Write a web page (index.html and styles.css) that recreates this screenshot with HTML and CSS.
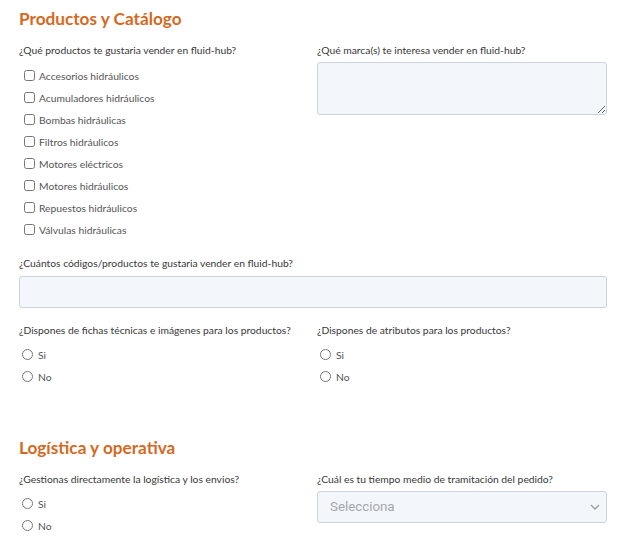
FILE: index.html
```html
<!DOCTYPE html>
<html lang="es">
<head>
<meta charset="utf-8">
<link rel="stylesheet" href="styles.css">
</head>
<body>
<form class="form">
  <h2 class="section-title">Productos y Catálogo</h2>
  <div class="grid">
    <div class="field">
      <p class="label">¿Qué productos te gustaria vender en fluid-hub?</p>
      <div class="options checks">
        <label class="opt"><input type="checkbox"><span>Accesorios hidráulicos</span></label>
        <label class="opt"><input type="checkbox"><span>Acumuladores hidráulicos</span></label>
        <label class="opt"><input type="checkbox"><span>Bombas hidráulicas</span></label>
        <label class="opt"><input type="checkbox"><span>Filtros hidráulicos</span></label>
        <label class="opt"><input type="checkbox"><span>Motores eléctricos</span></label>
        <label class="opt"><input type="checkbox"><span>Motores hidráulicos</span></label>
        <label class="opt"><input type="checkbox"><span>Repuestos hidráulicos</span></label>
        <label class="opt"><input type="checkbox"><span>Válvulas hidráulicas</span></label>
      </div>
    </div>
    <div class="field">
      <p class="label">¿Qué marca(s) te interesa vender en fluid-hub?</p>
      <textarea class="control textarea"></textarea>
    </div>
  </div>

  <div class="field full">
    <p class="label">¿Cuántos códigos/productos te gustaria vender en fluid-hub?</p>
    <input class="control input" type="text">
  </div>

  <div class="grid row3">
    <div class="field">
      <p class="label">¿Dispones de fichas técnicas e imágenes para los productos?</p>
      <div class="options radios">
        <label class="opt"><input type="radio" name="fichas"><span>Si</span></label>
        <label class="opt"><input type="radio" name="fichas"><span>No</span></label>
      </div>
    </div>
    <div class="field">
      <p class="label">¿Dispones de atributos para los productos?</p>
      <div class="options radios">
        <label class="opt"><input type="radio" name="attr"><span>Si</span></label>
        <label class="opt"><input type="radio" name="attr"><span>No</span></label>
      </div>
    </div>
  </div>

  <h2 class="section-title second">Logística y operativa</h2>
  <div class="grid">
    <div class="field">
      <p class="label">¿Gestionas directamente la logística y los envios?</p>
      <div class="options radios">
        <label class="opt"><input type="radio" name="log"><span>Si</span></label>
        <label class="opt"><input type="radio" name="log"><span>No</span></label>
      </div>
    </div>
    <div class="field">
      <p class="label">¿Cuál es tu tiempo medio de tramitación del pedido?</p>
      <div class="select-wrap">
        <select class="control select">
          <option>Selecciona</option>
        </select>
        <svg class="chev" width="10" height="6" viewBox="0 0 10 6"><path d="M1 1l4 4 4-4" fill="none" stroke="#9aa0a6" stroke-width="1.4"/></svg>
      </div>
    </div>
  </div>
</form>
</body>
</html>
```

FILE: styles.css
```css
* { box-sizing: border-box; }
html, body { margin: 0; padding: 0; background: #fff; }
body {
  font-family: "Lato", "Open Sans", sans-serif;
  color: #3c3c3c;
  font-size: 10px;
}
.form {
  padding: 0 25px 0 19px;
  width: 632px;
}
.section-title {
  margin: 0;
  padding-top: 9px;
  height: 38px;
  font-family: "Lato", sans-serif;
  font-weight: 700;
  font-size: 17.2px;
  line-height: 20px;
  color: #d5691f;
}
.section-title.second {
  margin-top: 42px;
}
.grid {
  display: grid;
  grid-template-columns: 290px 290px;
  column-gap: 8px;
}
.label {
  margin: 0;
  font-size: 10.3px;
  line-height: 14px;
  padding-top: 5px;
  height: 19px;
  color: #383838;
}
.options {
  display: flex;
  flex-direction: column;
}
.opt {
  display: flex;
  align-items: center;
  height: 22px;
  font-size: 10.3px;
  color: #555;
}
.checks { padding-top: 7px; }
.checks .opt input {
  margin: 0 4px 0 5px;
  width: 11px;
  height: 11px;
}
.radios { padding-top: 6px; }
.radios .opt input {
  margin: 0 5px 0 3px;
  width: 11px;
  height: 11px;
}
.opt span { position: relative; top: 1px; }
.control {
  display: block;
  width: 100%;
  background: #f3f6fa;
  border: 1px solid #ccd3db;
  border-radius: 3px;
  font-family: "Roboto", sans-serif;
}
.textarea {
  height: 53px;
  margin-top: 5px;
  resize: vertical;
}
.full { margin-top: 11px; }
.input { height: 32px; margin-top: 6px; }
.row3 { margin-top: 10px; }
.select-wrap { position: relative; margin-top: 5px; }
.select {
  appearance: none;
  height: 32px;
  padding: 0 12px 2px;
  font-size: 13.3px;
  color: #a3a8ae;
}
.chev { position: absolute; right: 7px; top: 13px; }
```
